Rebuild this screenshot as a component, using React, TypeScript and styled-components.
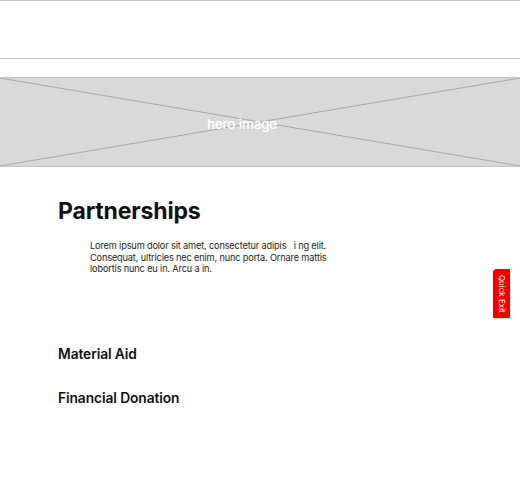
import React from 'react';
import styled, { createGlobalStyle } from 'styled-components';

const GlobalStyle = createGlobalStyle`
    html, body {
        margin: 0;
        padding: 0;
        background: #ffffff;
        font-family: Inter, "Liberation Sans", Arial, sans-serif;
        color: #111111;
    }
`;

const Page = styled.div`
    position: relative;
    width: 520px;
    min-height: 500px;
`;

const Header = styled.header`
    height: 57px;
    border-top: 1px solid #c6c6c6;
    border-bottom: 1px solid #c6c6c6;
`;

const Hero = styled.div`
    position: relative;
    margin-top: 18px;
    height: 88px;
    background: #d9d9d9;
    border-top: 1px solid #c2c2c2;
    border-bottom: 1px solid #c2c2c2;
    display: flex;
    align-items: center;
    justify-content: center;
    overflow: hidden;
    svg {
        position: absolute;
        inset: 0;
        width: 100%;
        height: 100%;
    }
`;

const HeroLabel = styled.span`
    position: relative;
    margin: 4px 36px 0 0;
    color: #ffffff;
    font-size: 13.5px;
    font-weight: 500;
    letter-spacing: -0.2px;
`;

const Content = styled.main`
    padding: 30px 0 0 58px;
`;

const Title = styled.h1`
    margin: 0;
    font-size: 23px;
    font-weight: 700;
    line-height: 28px;
    letter-spacing: -0.15px;
`;

const Intro = styled.p`
    margin: 15px 0 0 32px;
    width: 250px;
    font-size: 9.2px;
    line-height: 11.5px;
    color: #1e1e1e;
    letter-spacing: -0.15px;
`;

const Section = styled.h2<{ $gap: number }>`
    margin: ${(p) => p.$gap}px 0 0;
    font-size: 13.8px;
    font-weight: 600;
    line-height: 16px;
    letter-spacing: -0.1px;
`;

const QuickExit = styled.button`
    position: absolute;
    top: 269px;
    right: 10px;
    width: 17px;
    height: 49px;
    padding: 0;
    border: none;
    border-radius: 4px 1px 1px 1px;
    background: #f20000;
    color: #ffffff;
    font-family: inherit;
    font-size: 8px;
    display: flex;
    align-items: center;
    justify-content: center;
    box-shadow: 0 1px 2px rgba(0, 0, 0, 0.25);
    span {
        writing-mode: vertical-rl;
        white-space: nowrap;
    }
`;

const App = () => {
    return (
        <Page>
            <GlobalStyle />
            <Header />
            <Hero>
                <svg viewBox="0 0 520 88" preserveAspectRatio="none">
                    <line x1="0" y1="0" x2="520" y2="88" stroke="#a9a9a9" strokeWidth="1" />
                    <line x1="0" y1="88" x2="520" y2="0" stroke="#a9a9a9" strokeWidth="1" />
                </svg>
                <HeroLabel>hero image</HeroLabel>
            </Hero>
            <Content>
                <Title>Partnerships</Title>
                <Intro>
                    Lorem ipsum dolor sit amet, consectetur adipis&nbsp;&nbsp; i ng elit. Consequat, ultricies nec
                    enim, nunc porta. Ornare mattis lobortis nunc eu in. Arcu a in.
                </Intro>
                <Section $gap={71}>Material Aid</Section>
                <Section $gap={28}>Financial Donation</Section>
            </Content>
            <QuickExit>
                <span>Quick Exit</span>
            </QuickExit>
        </Page>
    );
};

export default App;
